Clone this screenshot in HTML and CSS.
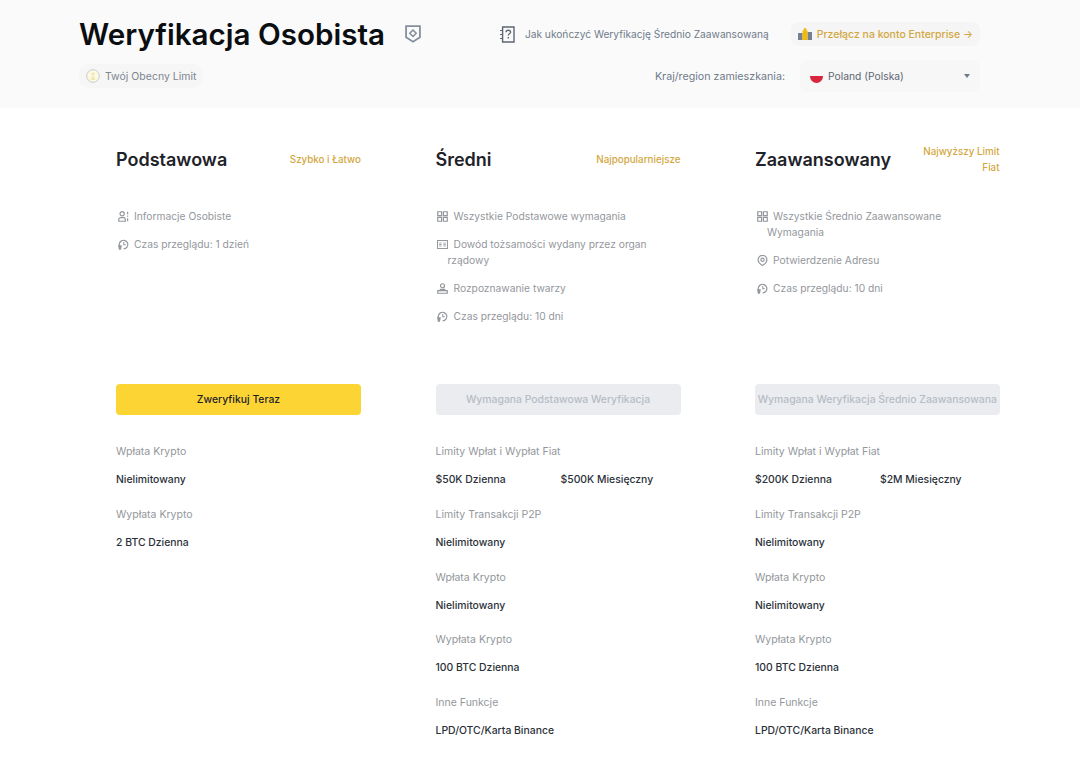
FILE: index.html
```html
<!DOCTYPE html>
<html lang="pl">
<head>
    <meta charset="UTF-8">
    <title>Weryfikacja Osobista</title>
    <link rel="stylesheet" href="styles.css">
</head>
<body>
    <svg class="sprite" width="0" height="0" aria-hidden="true">
        <symbol id="i-person" viewBox="0 0 12 12">
            <circle cx="4.5" cy="3" r="2.3" fill="none" stroke="currentColor" stroke-width="1.3"/>
            <path d="M.8 11.2V9.200C.8 8 2 7.300 3 7.300h3c1 0 2 .7 2 1.900v2z" fill="none" stroke="currentColor" stroke-width="1.3"/>
            <path d="M10.500 .8v2.700M10.500 5v1.200M10.500 8v3.200" stroke="currentColor" stroke-width="1.3"/>
        </symbol>
        <symbol id="i-clock" viewBox="0 0 12 12">
            <path d="M2.700 9.400A4.700 4.700 0 1 1 6.200 10.800" fill="none" stroke="currentColor" stroke-width="1.300"/>
            <path d="M6.300 3.200v3h2.200" fill="none" stroke="currentColor" stroke-width="1.100"/>
            <path d="M0 6.800h4.200l-1 5H1z" fill="currentColor"/>
        </symbol>
        <symbol id="i-grid" viewBox="0 0 12 12">
            <path d="M.8 .8h4.200V5H.8zM7 .8h4.200V5H7zM.8 7H5v4.200H.8zM7 7h4.200v4.200H7z" fill="none" stroke="currentColor" stroke-width="1.300"/>
        </symbol>
        <symbol id="i-card" viewBox="0 0 12 12">
            <path d="M.6 1.600h10.800v8.800H.6z" fill="none" stroke="currentColor" stroke-width="1.100"/>
            <path d="M2.400 4.400h2.600M2.400 6h2.600M2.400 7.600h2.600M7 4.400h2.600M7 6h2.600M7 7.600h2.600" stroke="currentColor" stroke-width=".9"/>
        </symbol>
        <symbol id="i-face" viewBox="0 0 12 12">
            <circle cx="6" cy="3" r="2.200" fill="none" stroke="currentColor" stroke-width="1.300"/>
            <path d="M.8 11.200V8.400h10.400v2.800zM3.600 8.400V7h4.800v1.400" fill="none" stroke="currentColor" stroke-width="1.300"/>
        </symbol>
        <symbol id="i-pin" viewBox="0 0 12 12">
            <path d="M6 11.400C3 9.600 1.200 7.600 1.200 5.200a4.800 4.800 0 0 1 9.600 0c0 2.400-1.800 4.400-4.800 6.200z" fill="none" stroke="currentColor" stroke-width="1.300"/>
            <circle cx="6" cy="5.200" r="1.800" fill="none" stroke="currentColor" stroke-width="1.200"/>
        </symbol>
    </svg>

    <header class="hero">
        <div class="hero-row">
            <div class="hero-title">
                <h1>Weryfikacja Osobista</h1>
                <svg class="badge-icon" viewBox="0 0 18 20">
                    <path d="M1.200 1.200h15.600v12.400L9 18.600l-7.800-5z" fill="none" stroke="#848e9c" stroke-width="2"/>
                    <path d="M9 5.600l3.600 3.600L9 12.800 5.400 9.200z" fill="none" stroke="#848e9c" stroke-width="1.700"/>
                </svg>
            </div>
            <div class="hero-links">
                <a class="guide-link">
                    <svg class="guide-icon" viewBox="0 0 15 17">
                        <path d="M2.600 1h11.400v15H2.600z" fill="none" stroke="#5e6673" stroke-width="1.400"/>
                        <path d="M0 4.500h3M0 8.500h3M0 12.500h3" stroke="#5e6673" stroke-width="1.200"/>
                        <path d="M6 6.200c0-2.600 4.600-2.600 4.600 0 0 1.600-2.300 1.600-2.300 3.300" fill="none" stroke="#5e6673" stroke-width="1.300"/>
                        <path d="M7.600 11h1.400v1.500H7.600z" fill="#5e6673"/>
                    </svg>
                    Jak ukończyć Weryfikację Średnio Zaawansowaną
                </a>
                <a class="enterprise-link">
                    <svg class="coins-icon" viewBox="0 0 14 12">
                        <path d="M0 5h4.500v7H0zM9.500 4H14v8H9.500z" fill="#76808f"/>
                        <path d="M4.500 2.500h5V12h-5z" fill="#f0b90b"/>
                        <circle cx="7" cy="1.500" r="1.500" fill="#f0b90b"/>
                    </svg>
                    Przełącz na konto Enterprise →
                </a>
            </div>
        </div>
        <div class="hero-row hero-row-low">
            <div class="limit-chip">
                <svg class="limit-icon" viewBox="0 0 14 14">
                    <circle cx="7" cy="7" r="6.300" fill="#fbf8e6" stroke="#c9ccc4" stroke-width="1"/>
                    <circle cx="7" cy="5" r="1.600" fill="#f2e5ad"/>
                    <path d="M4.800 11l1-3.500h2.400l1 3.500z" fill="#f2e5ad"/>
                </svg>
                Twój Obecny Limit
            </div>
            <div class="region">
                <span class="region-label">Kraj/region zamieszkania:</span>
                <div class="region-select">
                    <span class="flag"></span>
                    <span class="region-name">Poland (Polska)</span>
                    <span class="caret"></span>
                </div>
            </div>
        </div>
    </header>

    <main class="levels">
        <section class="level">
            <div class="level-head">
                <h2>Podstawowa</h2>
                <span class="level-tag">Szybko i Łatwo</span>
            </div>
            <ul class="reqs">
                <li><svg class="req-icon"><use href="#i-person"/></svg>Informacje Osobiste</li>
                <li><svg class="req-icon"><use href="#i-clock"/></svg>Czas przeglądu: 1 dzień</li>
            </ul>
            <button class="btn btn-primary">Zweryfikuj Teraz</button>
            <dl class="limits">
                <dt>Wpłata Krypto</dt>
                <dd>Nielimitowany</dd>
                <dt>Wypłata Krypto</dt>
                <dd>2 BTC Dzienna</dd>
            </dl>
        </section>

        <section class="level">
            <div class="level-head">
                <h2>Średni</h2>
                <span class="level-tag">Najpopularniejsze</span>
            </div>
            <ul class="reqs">
                <li><svg class="req-icon"><use href="#i-grid"/></svg>Wszystkie Podstawowe wymagania</li>
                <li><svg class="req-icon"><use href="#i-card"/></svg>Dowód tożsamości wydany przez organ rządowy</li>
                <li><svg class="req-icon"><use href="#i-face"/></svg>Rozpoznawanie twarzy</li>
                <li><svg class="req-icon"><use href="#i-clock"/></svg>Czas przeglądu: 10 dni</li>
            </ul>
            <button class="btn btn-disabled">Wymagana Podstawowa Weryfikacja</button>
            <dl class="limits">
                <dt>Limity Wpłat i Wypłat Fiat</dt>
                <dd class="split"><span>$50K Dzienna</span><span>$500K Miesięczny</span></dd>
                <dt>Limity Transakcji P2P</dt>
                <dd>Nielimitowany</dd>
                <dt>Wpłata Krypto</dt>
                <dd>Nielimitowany</dd>
                <dt>Wypłata Krypto</dt>
                <dd>100 BTC Dzienna</dd>
                <dt>Inne Funkcje</dt>
                <dd>LPD/OTC/Karta Binance</dd>
            </dl>
        </section>

        <section class="level">
            <div class="level-head">
                <h2>Zaawansowany</h2>
                <span class="level-tag level-tag-wrap">Najwyższy Limit Fiat</span>
            </div>
            <ul class="reqs">
                <li><svg class="req-icon"><use href="#i-grid"/></svg>Wszystkie Średnio Zaawansowane Wymagania</li>
                <li><svg class="req-icon"><use href="#i-pin"/></svg>Potwierdzenie Adresu</li>
                <li><svg class="req-icon"><use href="#i-clock"/></svg>Czas przeglądu: 10 dni</li>
            </ul>
            <button class="btn btn-disabled">Wymagana Weryfikacja Średnio Zaawansowana</button>
            <dl class="limits">
                <dt>Limity Wpłat i Wypłat Fiat</dt>
                <dd class="split"><span>$200K Dzienna</span><span>$2M Miesięczny</span></dd>
                <dt>Limity Transakcji P2P</dt>
                <dd>Nielimitowany</dd>
                <dt>Wpłata Krypto</dt>
                <dd>Nielimitowany</dd>
                <dt>Wypłata Krypto</dt>
                <dd>100 BTC Dzienna</dd>
                <dt>Inne Funkcje</dt>
                <dd>LPD/OTC/Karta Binance</dd>
            </dl>
        </section>
    </main>
</body>
</html>
```

FILE: styles.css
```css
* {
    margin: 0;
    padding: 0;
    box-sizing: border-box;
}

body {
    font-family: 'Inter', 'Noto Sans', sans-serif;
    background: #fff;
    color: #1e2329;
    font-size: 10.5px;
    overflow: hidden;
}

.sprite {
    display: block;
}

.hero {
    height: 108px;
    background: #fafafa;
    padding: 14px 100px 0 79px;
}

.hero-row {
    display: flex;
    justify-content: space-between;
    align-items: center;
    height: 40px;
}

.hero-row-low {
    height: 32px;
    margin-top: 6px;
}

.hero-title {
    display: flex;
    align-items: center;
}

h1 {
    font-size: 29.6px;
    font-weight: 600;
    color: #0b0e11;
}

.badge-icon {
    width: 16px;
    height: 18px;
    margin-left: 20px;
}

.hero-links {
    display: flex;
    align-items: center;
}

.guide-link {
    display: flex;
    align-items: center;
    color: #707a8a;
    font-size: 10.2px;
}

.guide-icon {
    width: 15px;
    height: 17px;
    margin-right: 10px;
}

.enterprise-link {
    display: flex;
    align-items: center;
    height: 24px;
    margin-left: 22px;
    padding: 0 7px;
    background: #f5f5f5;
    border-radius: 8px;
    color: #d3a73f;
    font-weight: 500;
}

.coins-icon {
    width: 14px;
    height: 12px;
    margin-right: 5px;
}

.limit-chip {
    display: flex;
    align-items: center;
    height: 24px;
    padding: 0 7px;
    background: #f6f6f6;
    border-radius: 10px;
    color: #7d8590;
}

.limit-icon {
    width: 14px;
    height: 14px;
    margin-right: 5px;
}

.region {
    display: flex;
    align-items: center;
}

.region-label {
    color: #707a8a;
    font-size: 10.7px;
}

.region-select {
    display: flex;
    align-items: center;
    width: 180px;
    height: 32px;
    margin-left: 15px;
    padding: 0 10px;
    background: #f7f7f7;
    border-radius: 8px;
    color: #5e6673;
    font-size: 10.3px;
}

.flag {
    width: 13px;
    height: 13px;
    margin-right: 5px;
    border-radius: 50%;
    background: linear-gradient(#f7f7f7 50%, #d7263d 50%);
}

.caret {
    margin-left: auto;
    border: 3px solid transparent;
    border-top: 4px solid #707a8a;
    border-bottom: 0;
}

.levels {
    display: grid;
    grid-template-columns: 245px 245px 244.5px;
    column-gap: 74.5px;
    padding: 0 0 0 116px;
}

.level-head {
    display: flex;
    justify-content: space-between;
    align-items: center;
    height: 32px;
    margin-top: 35px;
}

h2 {
    font-size: 18px;
    font-weight: 600;
    color: #1e2329;
}

.level-tag {
    color: #d3a73f;
    font-weight: 500;
    font-size: 9.8px;
    text-align: right;
}

.level-tag-wrap {
    width: 90px;
    line-height: 16px;
    margin-top: 1px;
}

.reqs {
    list-style: none;
    height: 209px;
    padding-top: 33px;
    color: #93979c;
    font-size: 10.25px;
}

.reqs li {
    line-height: 16px;
    margin-bottom: 12px;
    padding-left: 12px;
    text-indent: -12px;
}

.req-icon {
    width: 11px;
    height: 11px;
    margin: 0 5.5px 0 1.5px;
    vertical-align: -1.5px;
    color: #93979c;
}

.btn {
    display: block;
    width: 100%;
    height: 31px;
    border: none;
    border-radius: 4px;
    font-family: inherit;
    font-size: 10.4px;
    font-weight: 500;
    white-space: nowrap;
    overflow: visible;
    padding: 0;
}

.btn-primary {
    background: #fcd535;
    color: #1e2329;
}

.btn-disabled {
    background: #eaecef;
    color: #b7bdc6;
}

.limits {
    margin-top: 27px;
}

.limits dt {
    line-height: 20px;
    margin-bottom: 8px;
    color: #93979c;
}

.limits dd {
    line-height: 20px;
    margin-bottom: 14.75px;
    color: #2b3139;
    font-size: 10.4px;
    font-weight: 500;
}

.split {
    display: grid;
    grid-template-columns: 125px 120px;
}
```
